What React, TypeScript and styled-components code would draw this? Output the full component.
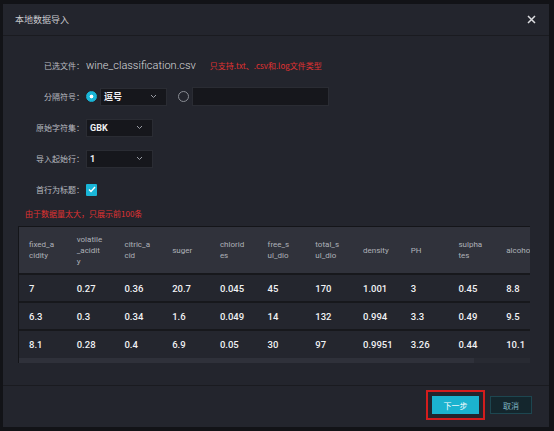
import { FC } from "react";
import styled, { createGlobalStyle } from "styled-components";

const GlobalStyle = createGlobalStyle`
  html, body {
    margin: 0;
    padding: 0;
    background: #121317;
    font-family: Roboto, "Noto Sans CJK SC", sans-serif;
  }
`;

const columns = [
  "fixed_acidity",
  "volatile_acidity",
  "citric_acid",
  "suger",
  "chlorides",
  "free_sul_dio",
  "total_sul_dio",
  "density",
  "PH",
  "sulphates",
  "alcohol",
];

const rows = [
  ["7", "0.27", "0.36", "20.7", "0.045", "45", "170", "1.001", "3", "0.45", "8.8"],
  ["6.3", "0.3", "0.34", "1.6", "0.049", "14", "132", "0.994", "3.3", "0.49", "9.5"],
  ["8.1", "0.28", "0.4", "6.9", "0.05", "30", "97", "0.9951", "3.26", "0.44", "10.1"],
];

const Chevron: FC = () => (
  <svg width="7" height="5" viewBox="0 0 7 5">
    <path d="M1 1l2.5 2.5L6 1" fill="none" stroke="#9a9da5" strokeWidth="1" />
  </svg>
);

export default function App() {
  return (
    <>
      <GlobalStyle />
      <Modal>
        <Header>
          <Title>本地数据导入</Title>
          <CloseButton>
            <svg width="9" height="9" viewBox="0 0 9 9">
              <path d="M1 1l7 7M8 1l-7 7" stroke="#dcdde0" strokeWidth="1.5" />
            </svg>
          </CloseButton>
        </Header>
        <Body>
          <Form>
            <Label>已选文件：</Label>
            <Field>
              <FileName>wine_classification.csv</FileName>
              <Hint>只支持.txt、.csv和.log文件类型</Hint>
            </Field>

            <Label>分隔符号：</Label>
            <Field>
              <Radio checked />
              <Select>
                <span>逗号</span>
                <Chevron />
              </Select>
              <Radio />
              <TextInput />
            </Field>

            <Label>原始字符集：</Label>
            <Field>
              <Select>
                <span>GBK</span>
                <Chevron />
              </Select>
            </Field>

            <Label>导入起始行：</Label>
            <Field>
              <Select>
                <span>1</span>
                <Chevron />
              </Select>
            </Field>

            <Label>首行为标题：</Label>
            <Field>
              <Checkbox>
                <svg width="8" height="7" viewBox="0 0 8 7">
                  <path d="M1 3.5l2 2 4-4.5" fill="none" stroke="#fff" strokeWidth="1.4" />
                </svg>
              </Checkbox>
            </Field>
          </Form>
          <Note>由于数据量太大，只展示前100条</Note>
          <TableWrap>
            <Table>
              <thead>
                <tr>
                  {columns.map((c) => (
                    <Th key={c}>{c}</Th>
                  ))}
                </tr>
              </thead>
              <tbody>
                {rows.map((r, i) => (
                  <tr key={i}>
                    {r.map((v, j) => (
                      <Td key={j}>{v}</Td>
                    ))}
                  </tr>
                ))}
              </tbody>
            </Table>
            <ScrollTrack>
              <ScrollThumb />
            </ScrollTrack>
          </TableWrap>
        </Body>
        <Footer>
          <PrimaryButton>下一步</PrimaryButton>
          <GhostButton>取消</GhostButton>
        </Footer>
      </Modal>
    </>
  );
}

const Modal = styled.div`
  margin: 4px 0 0 3px;
  width: 546px;
  height: 423px;
  background: #23252d;
  display: flex;
  flex-direction: column;
  box-sizing: border-box;
`;

const Header = styled.div`
  height: 31px;
  flex-shrink: 0;
  display: flex;
  align-items: center;
  justify-content: space-between;
  padding: 0 13px 0 12px;
  border-bottom: 1px solid #1a1b20;
`;

const Title = styled.span`
  font-size: 9px;
  color: #c9cacd;
  font-family: "Noto Sans CJK SC", sans-serif;
`;

const CloseButton = styled.span`
  display: flex;
  align-items: center;
`;

const Body = styled.div`
  flex: 1;
  padding-top: 14px;
  display: flex;
  flex-direction: column;
`;

const Form = styled.div`
  display: grid;
  grid-template-columns: 81px 1fr;
  grid-auto-rows: 31px;
  align-items: center;
`;

const Label = styled.span`
  text-align: right;
  font-size: 8px;
  color: #b9bbc0;
  font-family: "Noto Sans CJK SC", sans-serif;
  white-space: nowrap;
`;

const Field = styled.div`
  display: flex;
  align-items: center;
  padding-left: 2px;
`;

const FileName = styled.span`
  font-size: 11px;
  color: #d8d9dc;
  font-weight: 300;
`;

const Hint = styled.span`
  margin-left: 14px;
  font-size: 8px;
  color: #e03232;
  font-family: "Noto Sans CJK SC", sans-serif;
`;

const Radio = styled.span<{ checked?: boolean }>`
  width: 9px;
  height: 9px;
  border-radius: 50%;
  box-sizing: content-box;
  margin-right: 3px;
  margin-left: ${(p) => (p.checked ? "0" : "11px")};
  border: ${(p) => (p.checked ? "1px solid #19b6d8" : "1px solid #8a8d94")};
  background: ${(p) =>
    p.checked ? "radial-gradient(circle, #fff 0 1.6px, #19b6d8 2.2px)" : "transparent"};
`;

const Select = styled.div`
  width: 67px;
  height: 18px;
  box-sizing: border-box;
  display: flex;
  align-items: center;
  justify-content: space-between;
  padding: 0 9px 0 3px;
  background: #16171c;
  border: 1px solid #2a2c33;
  font-size: 9px;
  font-weight: 700;
  color: #f1f1f3;
  font-family: Roboto, "Noto Sans CJK SC", sans-serif;
`;

const TextInput = styled.div`
  width: 137px;
  height: 19px;
  box-sizing: border-box;
  background: #16171c;
  border: 1px solid #2a2c33;
`;

const Checkbox = styled.span`
  width: 11px;
  height: 12px;
  border-radius: 1px;
  background: #19b6d8;
  display: flex;
  align-items: center;
  justify-content: center;
`;

const Note = styled.div`
  margin: 1px 0 0 22px;
  height: 16px;
  line-height: 16px;
  font-size: 8px;
  color: #e03232;
  font-family: "Noto Sans CJK SC", sans-serif;
`;

const TableWrap = styled.div`
  margin: 4px 0 0 15px;
  width: 511px;
  overflow: hidden;
  border-top: 1px solid #141519;
  border-left: 1px solid #141519;
`;

const Table = styled.table`
  table-layout: fixed;
  width: 525px;
  border-collapse: collapse;
`;

const Th = styled.th`
  height: 47px;
  box-sizing: border-box;
  padding: 0 11.7px 0 10px;
  background: #30323b;
  text-align: left;
  font-size: 8px;
  line-height: 11px;
  font-weight: 400;
  color: #aeb1b8;
  word-break: break-all;
  vertical-align: middle;
`;

const Td = styled.td`
  height: 28px;
  box-sizing: border-box;
  padding: 0 4px 0 10px;
  background: #24262e;
  border-top: 2px solid #17181c;
  font-size: 9.5px;
  font-weight: 500;
  color: #f1f2f4;
  white-space: nowrap;
  overflow: hidden;
`;

const ScrollTrack = styled.div`
  height: 5px;
  background: #282a32;
`;

const ScrollThumb = styled.div`
  width: 455px;
  height: 5px;
  background: #2f313a;
`;

const Footer = styled.div`
  height: 42px;
  flex-shrink: 0;
  display: flex;
  align-items: center;
  justify-content: flex-end;
  gap: 11px;
  padding: 0 17px 3px 0;
  box-sizing: border-box;
  border-top: 1px solid #1a1b20;
`;

const PrimaryButton = styled.button`
  width: 47px;
  height: 18px;
  border: none;
  background: #1bb3cf;
  color: #fff;
  font-size: 8px;
  font-family: "Noto Sans CJK SC", sans-serif;
  outline: 2px solid #d41d1d;
  outline-offset: 4px;
  padding: 0;
`;

const GhostButton = styled.button`
  width: 42px;
  height: 18px;
  box-sizing: border-box;
  border: 1px solid #1d4650;
  background: #14262d;
  color: #7fb6c4;
  font-size: 8px;
  font-family: "Noto Sans CJK SC", sans-serif;
  padding: 0;
`;
